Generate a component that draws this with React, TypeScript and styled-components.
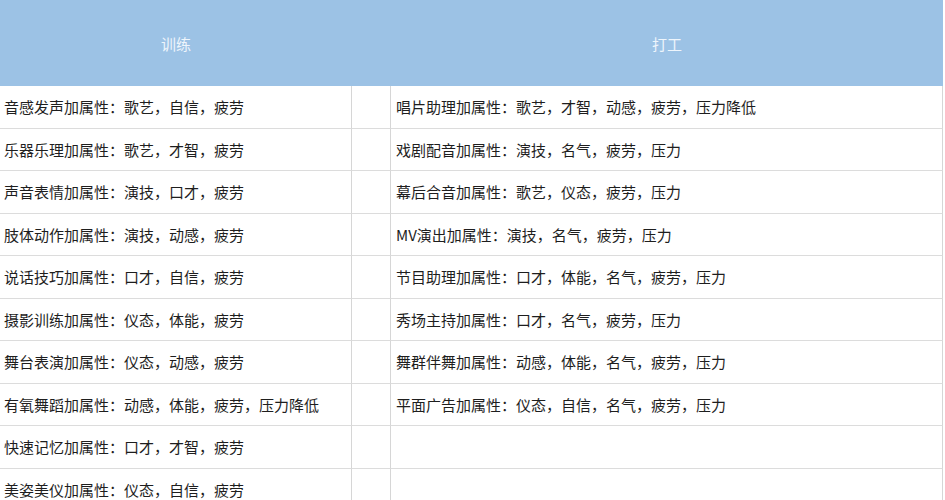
import * as React from "react";
import styled, { createGlobalStyle } from "styled-components";

const GlobalStyle = createGlobalStyle`
  html, body {
    margin: 0;
    padding: 0;
    background: #ffffff;
  }
  body {
    font-family: "Noto Sans CJK SC", "Liberation Sans", sans-serif;
  }
`;

const Table = styled.div`
  display: grid;
  grid-template-columns: 352px 39px 552px;
  width: 945px;
`;

const HeadCell = styled.div`
  height: 86px;
  background: #9cc2e5;
  color: #eef5fc;
  font-size: 15px;
  display: flex;
  align-items: center;
  justify-content: center;
`;

const Cell = styled.div<{ $last?: boolean }>`
  height: 42.5px;
  box-sizing: border-box;
  border-bottom: 1px solid #dcdcdc;
  border-right: 1px solid #d6d6d6;
  display: flex;
  align-items: center;
  padding-left: ${(p) => (p.$last ? "5px" : "4px")};
  font-size: 15px;
  color: #1e1e1e;
  white-space: nowrap;
`;

const train = [
  "音感发声加属性：歌艺，自信，疲劳",
  "乐器乐理加属性：歌艺，才智，疲劳",
  "声音表情加属性：演技，口才，疲劳",
  "肢体动作加属性：演技，动感，疲劳",
  "说话技巧加属性：口才，自信，疲劳",
  "摄影训练加属性：仪态，体能，疲劳",
  "舞台表演加属性：仪态，动感，疲劳",
  "有氧舞蹈加属性：动感，体能，疲劳，压力降低",
  "快速记忆加属性：口才，才智，疲劳",
  "美姿美仪加属性：仪态，自信，疲劳",
];

const work = [
  "唱片助理加属性：歌艺，才智，动感，疲劳，压力降低",
  "戏剧配音加属性：演技，名气，疲劳，压力",
  "幕后合音加属性：歌艺，仪态，疲劳，压力",
  "MV演出加属性：演技，名气，疲劳，压力",
  "节目助理加属性：口才，体能，名气，疲劳，压力",
  "秀场主持加属性：口才，名气，疲劳，压力",
  "舞群伴舞加属性：动感，体能，名气，疲劳，压力",
  "平面广告加属性：仪态，自信，名气，疲劳，压力",
  "",
  "",
];

export default function App() {
  return (
    <>
      <GlobalStyle />
      <Table>
        <HeadCell>训练</HeadCell>
        <HeadCell />
        <HeadCell>打工</HeadCell>
        {train.map((t, i) => (
          <React.Fragment key={i}>
            <Cell>{t}</Cell>
            <Cell />
            <Cell $last>{work[i]}</Cell>
          </React.Fragment>
        ))}
      </Table>
    </>
  );
}
